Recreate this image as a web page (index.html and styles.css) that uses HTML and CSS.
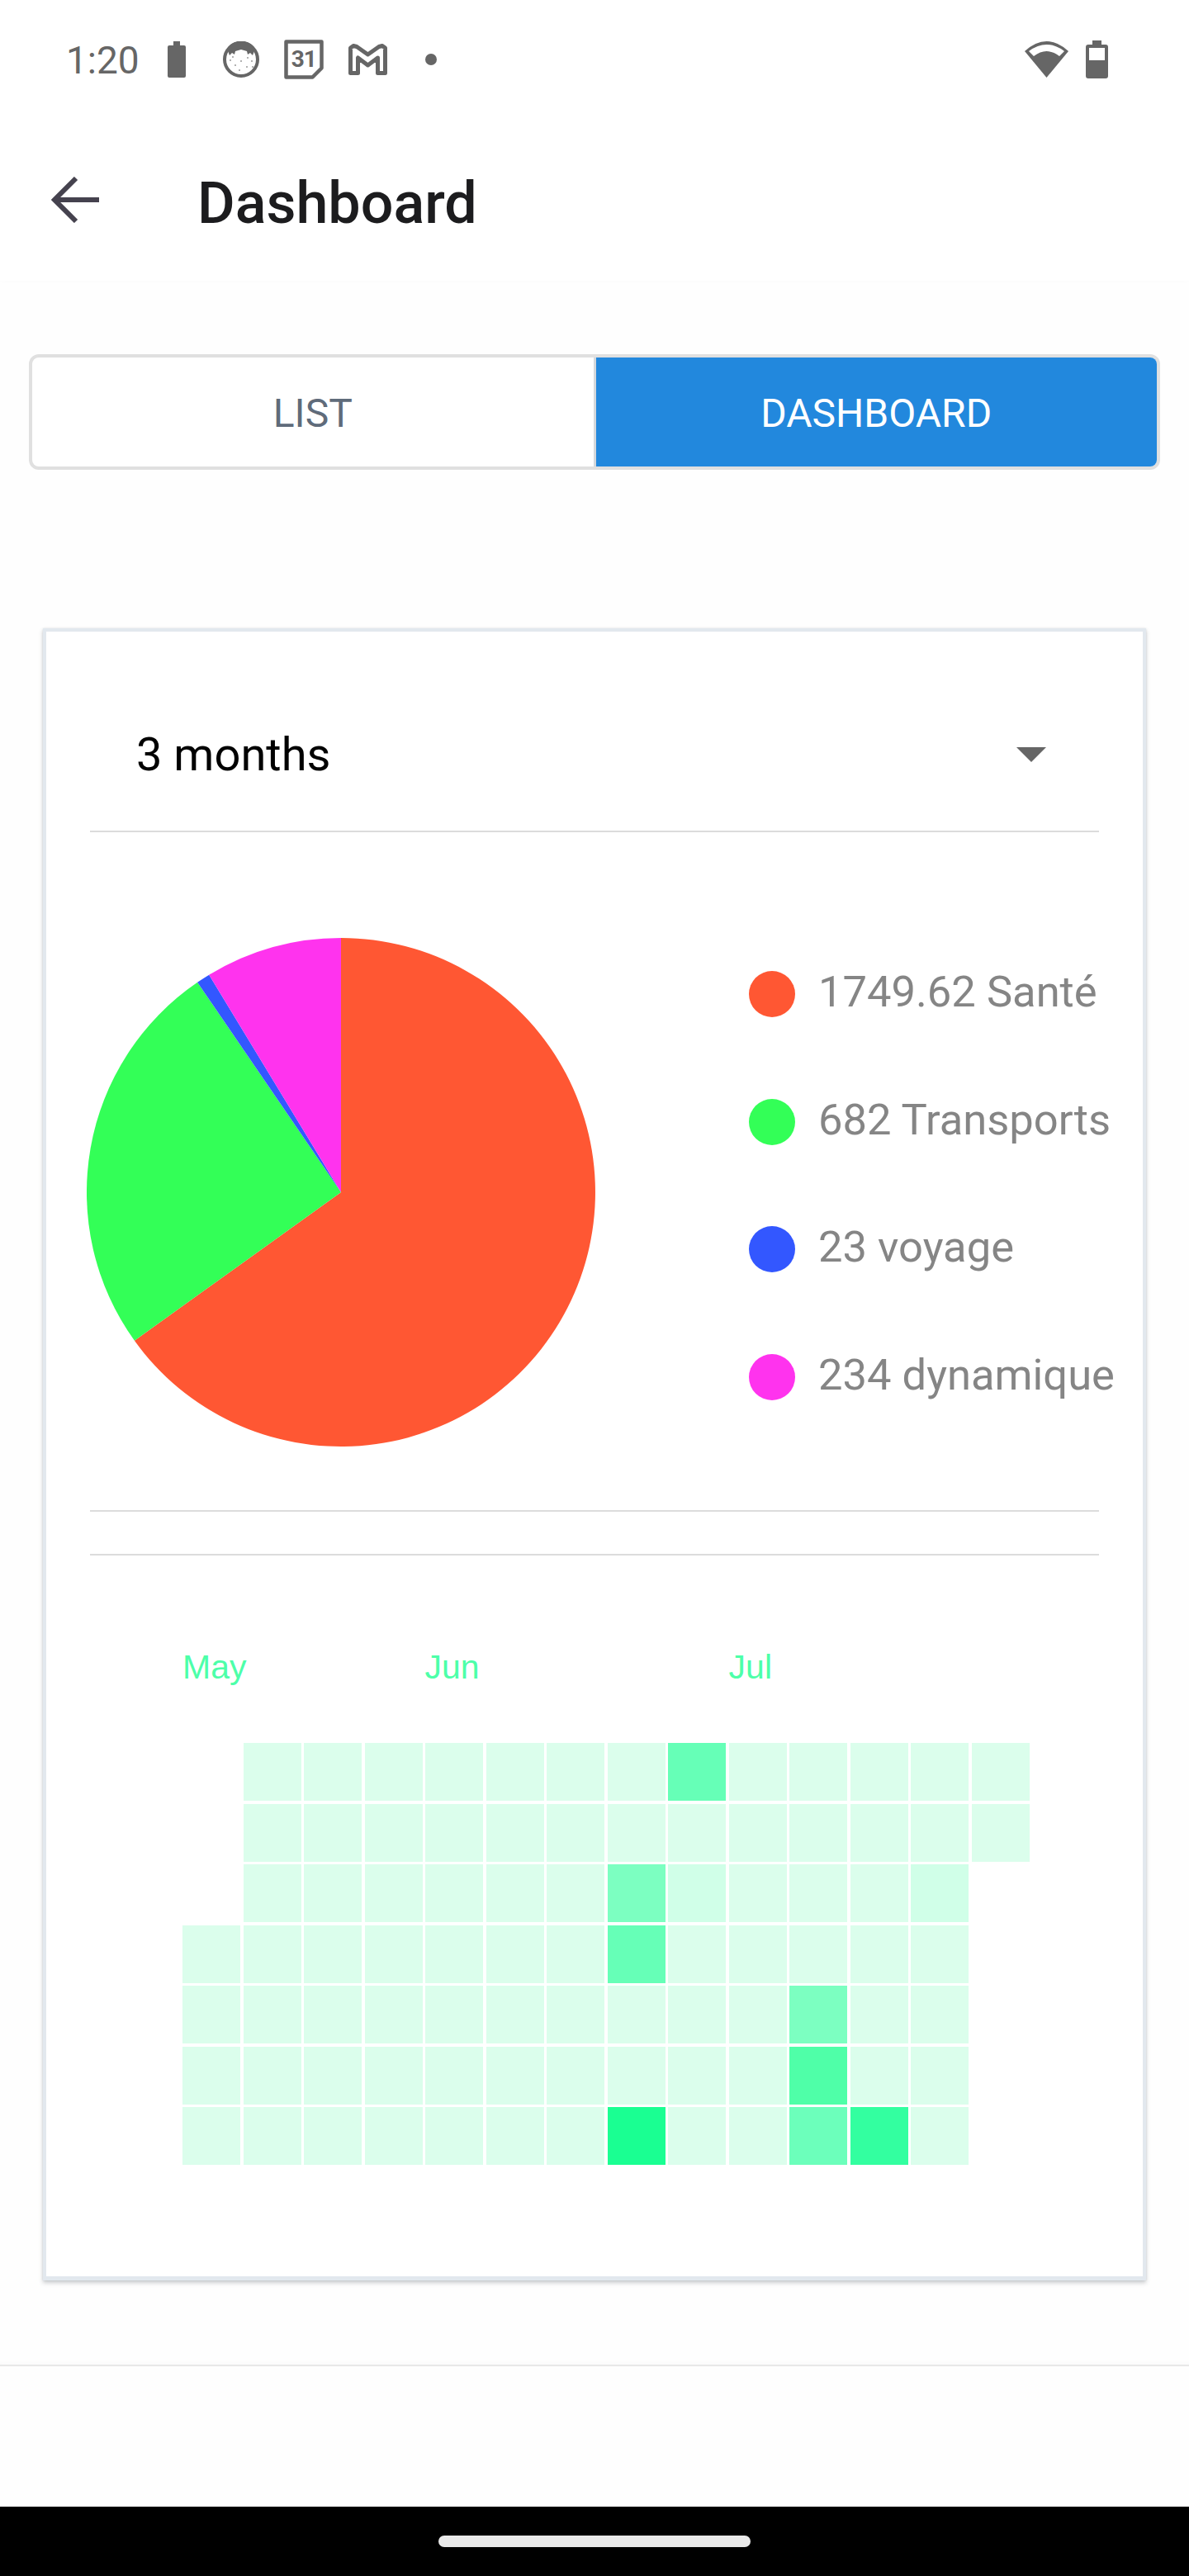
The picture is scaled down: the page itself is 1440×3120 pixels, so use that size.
FILE: index.html
```html
<!DOCTYPE html>
<html lang="en">
<head>
    <meta charset="UTF-8">
    <meta name="viewport" content="width=device-width, initial-scale=1.0">
    <title>Dashboard</title>
    <link rel="stylesheet" href="styles.css">
</head>
<body>
    <div class="status-bar">
        <span class="status-time">1:20</span>
        <svg class="icon-saver" width="22" height="44" viewBox="0 0 22 44"><path fill="#666" d="M7 0h8v5h5a2 2 0 0 1 2 2v35a2 2 0 0 1-2 2H2a2 2 0 0 1-2-2V7a2 2 0 0 1 2-2h5z"/></svg>
        <svg class="icon-face" width="44" height="44" viewBox="0 0 44 44">
            <circle cx="22" cy="22" r="20" fill="#fff" stroke="#666" stroke-width="4"/>
            <path fill="#666" d="M5 9a20 20 0 0 1 34 0l-3 8-3-3-3 2-1-4-7-2-7 2-1 4-3-2-3 3z"/>
            <g fill="#999">
                <circle cx="9" cy="23" r="1"/><circle cx="15" cy="29" r="1"/><circle cx="22" cy="24" r="1"/>
                <circle cx="29" cy="31" r="1"/><circle cx="35" cy="24" r="1"/><circle cx="20" cy="35" r="1"/>
                <circle cx="12" cy="19" r="1"/><circle cx="30" cy="20" r="1"/><circle cx="36" cy="31" r="1"/>
            </g>
        </svg>
        <span class="icon-calendar">
            <svg width="48" height="48" viewBox="0 0 48 48"><path fill="none" stroke="#666" stroke-width="4.500" stroke-linejoin="round" d="M2.500 2.500h43v32l-11 11h-32z"/></svg>
            <span class="calendar-day">31</span>
        </span>
        <svg class="icon-gmail" width="47" height="38" viewBox="0 0 47 38"><path fill="#fff" stroke="#666" stroke-width="5" stroke-linejoin="round" d="M2.500 35.500V5L6 2.500l4 1 13.500 9.500L37 3.500l4-1L44.500 5v30.500h-9V17l-12 9-12-9v18.500z"/></svg>
        <span class="status-dot"></span>
        <svg class="icon-wifi" width="53" height="44" viewBox="0 0 53 44">
            <path fill="#666" d="M26.500 44L0 12Q26.500-12 53 12z"/>
            <path fill="#fff" d="M5 12Q26.500-4 48 12l-6 6Q26.500 6 11 18z"/>
        </svg>
        <svg class="icon-battery" width="27" height="46" viewBox="0 0 27 46">
            <path fill="#666" d="M8 0h11v5h5a3 3 0 0 1 3 3v35a3 3 0 0 1-3 3H3a3 3 0 0 1-3-3V8a3 3 0 0 1 3-3h5z"/>
            <rect x="4" y="9" width="19" height="15" fill="#fff"/>
        </svg>
    </div>

    <header class="app-bar">
        <svg class="back-arrow" width="58" height="56" viewBox="0 0 58 56"><path fill="none" stroke="#45424e" stroke-width="6" d="M58 28H5M30 2L4 28l26 26"/></svg>
        <h1>Dashboard</h1>
    </header>

    <main>
        <div class="tabs">
            <div class="tab">LIST</div>
            <div class="tab active">DASHBOARD</div>
        </div>

        <section class="card">
            <div class="select-row">
                <span>3 months</span>
                <span class="select-arrow"></span>
            </div>

            <div class="pie-row">
                <svg class="pie" width="616" height="616" viewBox="-308 -308 616 616">
                    <!-- Santé, Transports, voyage, dynamique -->
                    <path fill="#ff5733" d="M0 0V-308A308 308 0 1 1 -250.100 179.800Z"/>
                    <path fill="#33ff57" d="M0 0L-250.100 179.800A308 308 0 0 1 -173.900 -254.200Z"/>
                    <path fill="#3357ff" d="M0 0L-173.900 -254.200A308 308 0 0 1 -159.800 -263.300Z"/>
                    <path fill="#ff33ee" d="M0 0L-159.800 -263.300A308 308 0 0 1 0 -308Z"/>
                </svg>
                <ul class="legend">
                    <li><span class="dot santé"></span>1749.62 Santé</li>
                    <li><span class="dot transports"></span>682 Transports</li>
                    <li><span class="dot voyage"></span>23 voyage</li>
                    <li><span class="dot dynamique"></span>234 dynamique</li>
                </ul>
            </div>

            <div class="heatmap">
                <div class="months">
                    <span class="month-may">May</span>
                    <span class="month-jun">Jun</span>
                    <span class="month-jul">Jul</span>
                </div>
                <div class="heat-row">
                    <i class="none"></i><i></i><i></i><i></i><i></i><i></i><i></i><i></i><i class="l4"></i><i></i><i></i><i></i><i></i><i></i>
                </div>
                <div class="heat-row">
                    <i class="none"></i><i></i><i></i><i></i><i></i><i></i><i></i><i></i><i></i><i></i><i></i><i></i><i></i><i></i>
                </div>
                <div class="heat-row">
                    <i class="none"></i><i></i><i></i><i></i><i></i><i></i><i></i><i class="l3"></i><i class="l1"></i><i></i><i></i><i></i><i class="l1"></i>
                </div>
                <div class="heat-row">
                    <i></i><i></i><i></i><i></i><i></i><i></i><i></i><i class="l4"></i><i></i><i></i><i></i><i></i><i></i>
                </div>
                <div class="heat-row">
                    <i></i><i></i><i></i><i></i><i></i><i></i><i></i><i></i><i></i><i></i><i class="l3"></i><i></i><i></i>
                </div>
                <div class="heat-row">
                    <i></i><i></i><i></i><i></i><i></i><i></i><i></i><i></i><i></i><i></i><i class="l5"></i><i></i><i></i>
                </div>
                <div class="heat-row">
                    <i></i><i></i><i></i><i></i><i></i><i></i><i></i><i class="l7"></i><i></i><i></i><i class="l3b"></i><i class="l6"></i><i></i>
                </div>
            </div>
        </section>
    </main>

    <div class="nav-bar"><span class="nav-pill"></span></div>
</body>
</html>
```

FILE: styles.css
```css
/* Basic Reset */
* {
    margin: 0;
    padding: 0;
    box-sizing: border-box;
}

body {
    width: 1440px;
    height: 3120px;
    display: flex;
    flex-direction: column;
    font-family: Roboto, Arial, sans-serif;
    background-color: #fefefe;
    overflow: hidden;
}

/* Status bar */
.status-bar {
    height: 144px;
    padding: 0 98px 0 80px;
    display: flex;
    align-items: center;
    background-color: #fff;
    color: #666;
}

.status-time {
    margin-top: 2px;
    font-size: 46px;
    line-height: 46px;
}

.icon-saver { margin-left: 34px; }
.icon-face { margin-left: 45px; }
.icon-gmail { margin-left: 30px; }

.icon-calendar {
    position: relative;
    width: 48px;
    height: 48px;
    margin-left: 30px;
    display: flex;
    align-items: center;
    justify-content: center;
}

.icon-calendar svg {
    position: absolute;
    top: 0;
    left: 0;
}

.calendar-day {
    position: relative;
    top: -1px;
    font-size: 28px;
    font-weight: 700;
    letter-spacing: -1px;
    color: #666;
}

.status-dot {
    width: 14px;
    height: 14px;
    margin-left: 46px;
    border-radius: 50%;
    background-color: #666;
}

.icon-wifi { margin-left: auto; }
.icon-battery { margin-left: 21px; }

/* App bar */
.app-bar {
    height: 196px;
    padding-left: 62px;
    display: flex;
    align-items: center;
    background-color: #fff;
    box-shadow: 0 2px 6px rgba(0, 0, 0, 0.01);
}

.app-bar h1 {
    margin: 8px 0 0 119px;
    font-size: 70px;
    font-weight: 500;
    color: #1c1c1e;
}

/* Tabs */
main {
    flex: 1;
    padding: 89px 35px 0;
    border-bottom: 2px solid #e8e8e8;
    box-shadow: inset 0 -8px 8px -8px rgba(0, 0, 0, 0.03);
}

.tabs {
    height: 140px;
    display: flex;
    border: 4px solid #e0e0e0;
    border-radius: 12px;
    overflow: hidden;
    background-color: #fff;
}

.tab {
    flex: 1;
    padding-top: 3px;
    display: flex;
    align-items: center;
    justify-content: center;
    font-size: 48px;
    color: #5f6b7a;
}

.tab:first-child {
    border-right: 3px solid #d4d8dc;
}

.tab.active {
    background-color: #2288dd;
    color: #fff;
}

/* Card */
.card {
    margin: 192px 17px 0;
    height: 2001px;
    border: 4px solid #e2e8ee;
    border-bottom-width: 5px;
    background-color: #fff;
    box-shadow: 0 3px 5px rgba(50, 60, 70, 0.25), 0 0 2px rgba(50, 60, 70, 0.12);
}

.select-row {
    height: 243px;
    margin: 0 53px;
    padding: 56px 64px 0 56px;
    display: flex;
    align-items: center;
    justify-content: space-between;
    border-bottom: 2px solid #dcdcdc;
    font-size: 56px;
    color: #000;
}

.select-arrow {
    width: 0;
    height: 0;
    border-left: 18px solid transparent;
    border-right: 18px solid transparent;
    border-top: 18px solid #666;
}

/* Pie and legend */
.pie-row {
    height: 823px;
    margin: 0 53px;
    padding-top: 128px;
    display: flex;
    align-items: flex-start;
    border-bottom: 2px solid #dcdcdc;
}

.pie {
    flex-shrink: 0;
    margin-left: -4px;
}

.legend {
    flex-shrink: 0;
    margin: 37px 0 0 186px;
    list-style: none;
    font-size: 52.5px;
    color: #858585;
}

.legend li {
    height: 56px;
    margin-bottom: 98.5px;
    display: flex;
    align-items: center;
    white-space: nowrap;
}

.dot {
    width: 56px;
    height: 56px;
    margin: 6px 28px 0 0;
    border-radius: 50%;
}

.santé { background-color: #ff5733; }
.transports { background-color: #33ff57; }
.voyage { background-color: #3357ff; }
.dynamique { background-color: #ff33ee; }

/* Heatmap */
.heatmap {
    margin: 51px 53px 0;
    padding: 111px 0 0 112px;
    border-top: 2px solid #dcdcdc;
}

.months {
    height: 116px;
    display: flex;
    font-family: "Liberation Sans", Arial, sans-serif;
    font-size: 41px;
    line-height: 48px;
    color: #4dffa9;
}

.month-jun { margin-left: 216px; }
.month-jul { margin-left: 302px; }

.heat-row {
    display: flex;
    gap: 3.5px;
    margin-bottom: 3.5px;
}

.heat-row i {
    width: 70px;
    height: 70px;
    background-color: #dbfeec;
}

.heat-row i.none { background-color: transparent; }
.heat-row i.l1 { background-color: #d0ffe8; }
.heat-row i.l3 { background-color: #7cffc1; }
.heat-row i.l3b { background-color: #6cffbb; }
.heat-row i.l4 { background-color: #66ffb7; }
.heat-row i.l5 { background-color: #4fffa8; }
.heat-row i.l6 { background-color: #33ffa0; }
.heat-row i.l7 { background-color: #1aff92; }

/* Navigation bar */
.nav-bar {
    height: 84px;
    margin-top: 170px;
    display: flex;
    align-items: center;
    justify-content: center;
    background-color: #000;
}

.nav-pill {
    width: 378px;
    height: 14px;
    border-radius: 7px;
    background-color: #e9e9e9;
}
```
